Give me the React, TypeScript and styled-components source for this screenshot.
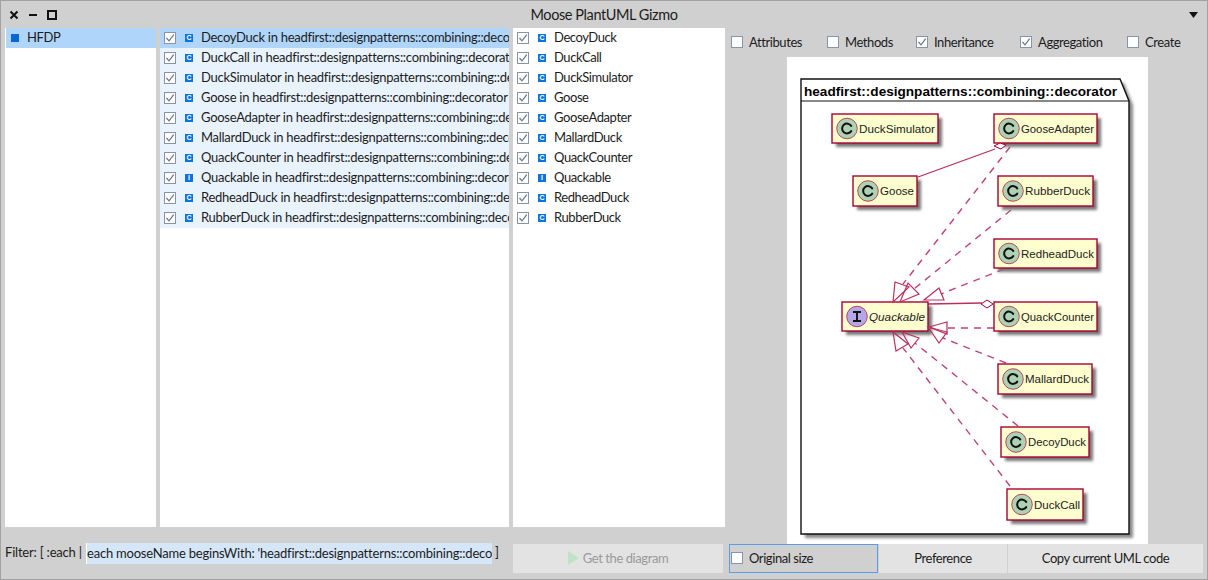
import { createGlobalStyle, styled } from 'styled-components';

// Moose PlantUML Gizmo window: three lists, option checkboxes and the rendered diagram.

const CLASSES = [
  'DecoyDuck',
  'DuckCall',
  'DuckSimulator',
  'Goose',
  'GooseAdapter',
  'MallardDuck',
  'QuackCounter',
  'Quackable',
  'RedheadDuck',
  'RubberDuck',
];

const NAMESPACE = 'headfirst::designpatterns::combining::decorator';

const OPTIONS = [
  { label: 'Attributes', checked: false, width: 96 },
  { label: 'Methods', checked: false, width: 89 },
  { label: 'Inheritance', checked: true, width: 104 },
  { label: 'Aggregation', checked: true, width: 107 },
  { label: 'Create', checked: false, width: 70 },
];

interface NodeBox {
  name: string;
  x: number;
  y: number;
  w: number;
  h: number;
}

const NODES: NodeBox[] = [
  { name: 'DuckSimulator', x: 832, y: 114, w: 106, h: 29 },
  { name: 'GooseAdapter', x: 994, y: 114, w: 103, h: 29 },
  { name: 'Goose', x: 853, y: 176, w: 64, h: 30 },
  { name: 'RubberDuck', x: 998, y: 176, w: 95, h: 30 },
  { name: 'RedheadDuck', x: 994, y: 239, w: 103, h: 29 },
  { name: 'Quackable', x: 842, y: 302, w: 86, h: 29 },
  { name: 'QuackCounter', x: 994, y: 302, w: 103, h: 29 },
  { name: 'MallardDuck', x: 998, y: 364, w: 94, h: 30 },
  { name: 'DecoyDuck', x: 1001, y: 427, w: 88, h: 30 },
  { name: 'DuckCall', x: 1007, y: 489, w: 76, h: 31 },
];

// dashed line from the implementor, then the hollow arrow head at Quackable
const REALIZATIONS = [
  { line: 'M1010 147 L903 284', head: '893,302 895,282 909,287' },
  { line: 'M1011 210 L914 289', head: '900,302 908,283 919,294' },
  { line: 'M1004 269 L941 294', head: '924,300 939,288 944,300' },
  { line: 'M994 328 L947 328', head: '929,327 947,322 947,334' },
  { line: 'M1006 363 L943 338', head: '928,327 947,332 939,343' },
  { line: 'M1018 426 L915 343', head: '902,332 919,338 911,348' },
  { line: 'M1010 486 L903 348', head: '893,332 908,344 896,351' },
];

const GlobalStyle = createGlobalStyle`
  html, body {
    margin: 0;
    padding: 0;
    background: #d0d0d0;
  }
  body {
    font-family: "Lato", "Noto Sans", sans-serif;
    font-size: 13px;
    letter-spacing: -0.42px;
    color: #1c1c1c;
  }
`;

const Window = styled.div`
  box-sizing: border-box;
  width: 1208px;
  height: 580px;
  border: 1px solid #a2a2a2;
  background: #d0d0d0;
  display: flex;
  flex-direction: column;
  overflow: hidden;
`;

const TitleBar = styled.div`
  height: 27px;
  flex: none;
  display: flex;
  align-items: center;
  position: relative;
  padding: 0 7px 0 8px;
`;

const WindowButtons = styled.div`
  display: flex;
  gap: 9px;
  align-items: center;
`;

const WindowTitle = styled.div`
  position: absolute;
  left: 0;
  right: 0;
  top: 5px;
  text-align: center;
  font-size: 14.5px;
  pointer-events: none;
`;

const MenuArrow = styled.svg`
  margin-left: auto;
  margin-right: 2px;
`;

const Body = styled.div`
  flex: 1;
  display: flex;
  min-height: 0;
`;

const LeftSide = styled.div`
  width: 724px;
  flex: none;
  display: flex;
  flex-direction: column;
`;

const Lists = styled.div`
  height: 499px;
  flex: none;
  display: flex;
  padding-left: 4px;
`;

const ListPanel = styled.div<{ $width: number; $gap: number }>`
  width: ${(p) => p.$width}px;
  margin-right: ${(p) => p.$gap}px;
  flex: none;
  background: #fff;
  overflow: hidden;
`;

const Row = styled.div<{ $tone?: 'selected' | 'soft' }>`
  height: 20px;
  display: flex;
  align-items: center;
  white-space: nowrap;
  padding-left: 4px;
  background: ${(p) =>
    p.$tone === 'selected' ? '#b0d5fb' : p.$tone === 'soft' ? '#e9f3fe' : 'transparent'};
`;

const RowText = styled.span<{ $long?: boolean }>`
  margin-top: -2px;
  letter-spacing: ${(p) => (p.$long ? '-0.28px' : '-0.42px')};
`;

const ProjectRow = styled(Row)`
  padding-left: 5px;
  margin-left: 1px;
`;

const ProjectMark = styled.span`
  width: 8px;
  height: 8px;
  background: #0a66d8;
  margin-right: 8px;
`;

const CheckFrame = styled.span<{ $margin?: number }>`
  box-sizing: border-box;
  width: 12px;
  height: 12px;
  flex: none;
  display: inline-flex;
  align-items: center;
  justify-content: center;
  border: 1px solid #8a94a6;
  background: #fcfdff;
  margin-right: ${(p) => p.$margin ?? 9}px;
`;

const TypeIcon = styled.span`
  width: 8px;
  height: 8px;
  flex: none;
  background: #0b74de;
  color: #fff;
  font: bold 7px/8px "Liberation Sans", sans-serif;
  letter-spacing: 0;
  text-align: center;
  margin-right: 8px;
`;

const FilterBar = styled.div`
  flex: 1;
  display: flex;
  align-items: flex-start;
  padding: 17px 0 0 4px;
`;

const FilterLabel = styled.span`
  width: 81px;
  flex: none;
  line-height: 16px;
  letter-spacing: -0.2px;
`;

const FilterInput = styled.div`
  width: 406px;
  height: 21px;
  flex: none;
  margin-top: -1px;
  padding: 0 0 0 1px;
  box-sizing: border-box;
  background: #fff;
  line-height: 21px;
  letter-spacing: -0.21px;
  white-space: nowrap;
  overflow: hidden;
`;

const FilterSelection = styled.span`
  display: block;
  background: #d5e6f9;
`;

const FilterClose = styled.span`
  width: 18px;
  flex: none;
  padding-left: 3px;
  line-height: 16px;
`;

const ActionButton = styled.div<{ $width: number; $disabled?: boolean }>`
  box-sizing: border-box;
  width: ${(p) => p.$width}px;
  height: 29px;
  flex: none;
  display: flex;
  align-items: center;
  justify-content: center;
  padding-bottom: 2px;
  background: #e3e3e3;
  color: ${(p) => (p.$disabled ? '#9a9a9a' : 'inherit')};
  gap: 4px;
`;

const RightSide = styled.div`
  flex: 1;
  display: flex;
  flex-direction: column;
  min-width: 0;
`;

const OptionsBar = styled.div`
  height: 29px;
  flex: none;
  display: flex;
  align-items: center;
  padding: 0 0 2px 6px;
  box-sizing: border-box;
`;

const Option = styled.label<{ $width: number }>`
  width: ${(p) => p.$width}px;
  flex: none;
  display: flex;
  align-items: center;
`;

const DiagramPanel = styled.div`
  width: 361px;
  height: 487px;
  flex: none;
  margin-left: 62px;
  background: #fff;
`;

const DiagramSvg = styled.svg`
  display: block;
  letter-spacing: 0;
`;

const BottomButtons = styled.div`
  display: flex;
  gap: 1px;
  padding-left: 4px;
`;

const SizeToggle = styled.div`
  box-sizing: border-box;
  width: 149px;
  height: 29px;
  flex: none;
  display: flex;
  align-items: center;
  padding: 0 0 2px 1px;
  border: 1px solid #5a9fe6;
  background: #d0d0d0;
`;

function Check({ checked = true, margin }: { checked?: boolean; margin?: number }) {
  return (
    <CheckFrame $margin={margin}>
      {checked && (
        <svg width="10" height="10" viewBox="0 0 10 10">
          <path d="M1.5 5 L4 7.8 L8.8 1.6" fill="none" stroke="#6e7684" strokeWidth="1.2" />
        </svg>
      )}
    </CheckFrame>
  );
}

function ClassRow({
  name,
  label,
  soft,
  long,
}: {
  name: string;
  label: string;
  soft?: 'selected' | 'soft';
  long?: boolean;
}) {
  return (
    <Row $tone={soft}>
      <Check />
      <TypeIcon>{name === 'Quackable' ? 'I' : 'C'}</TypeIcon>
      <RowText $long={long}>{label}</RowText>
    </Row>
  );
}

function UmlNode({ node }: { node: NodeBox }) {
  const isInterface = node.name === 'Quackable';
  const cx = node.x + 15;
  const cy = node.y + node.h / 2;
  return (
    <g>
      <rect
        x={node.x + 4}
        y={node.y + 4}
        width={node.w}
        height={node.h}
        fill="#777"
        filter="url(#umlShadow)"
      />
      <rect
        x={node.x}
        y={node.y}
        width={node.w}
        height={node.h}
        fill="#fefece"
        stroke="#a80036"
        strokeWidth="1.4"
      />
      <circle
        cx={cx}
        cy={cy}
        r="10.3"
        fill={isInterface ? '#b4a7e5' : '#add1b2'}
        stroke="#a80036"
        strokeWidth="0.9"
        strokeOpacity="0.75"
      />
      {isInterface ? (
        <path
          d={`M${cx - 4} ${cy - 4.5} H${cx + 4} M${cx} ${cy - 4.5} V${cy + 4.5} M${cx - 4} ${cy + 4.5} H${cx + 4}`}
          fill="none"
          stroke="#111"
          strokeWidth="1.9"
        />
      ) : (
        <path
          d={`M${cx + 4.2} ${cy - 2.6} A4.9 4.9 0 1 0 ${cx + 4.2} ${cy + 2.6}`}
          fill="none"
          stroke="#111"
          strokeWidth="2"
          strokeLinecap="round"
        />
      )}
      <text
        x={node.x + 27}
        y={cy + 4}
        fontFamily="'Liberation Sans', sans-serif"
        fontSize="11"
        fontStyle={isInterface ? 'italic' : 'normal'}
        fill="#222"
        textLength={node.w - 30}
        lengthAdjust="spacingAndGlyphs"
      >
        {node.name}
      </text>
    </g>
  );
}

function Diagram() {
  return (
    <DiagramSvg width="361" height="487" viewBox="787 57 361 487">
      <defs>
        <filter id="umlShadow" x="-20%" y="-20%" width="140%" height="140%">
          <feGaussianBlur stdDeviation="1.5" />
        </filter>
      </defs>
      {/* package frame */}
      <path d="M805 83 H1124 L1133 105 V538 H805 Z" fill="#888" filter="url(#umlShadow)" />
      <path d="M801 534 V79 H1120 L1129 101 V534 Z" fill="#fff" stroke="#111" strokeWidth="1.4" />
      <path d="M801 101 H1129" fill="none" stroke="#111" strokeWidth="1.2" />
      <text
        x="804"
        y="95.5"
        fontFamily="'Liberation Sans', sans-serif"
        fontSize="13"
        fontWeight="bold"
        fill="#000"
        textLength="313"
        lengthAdjust="spacingAndGlyphs"
      >
        {NAMESPACE}
      </text>
      {/* aggregations */}
      <path d="M918 177 L995 149" stroke="#b8305f" strokeWidth="1.3" fill="none" />
      <path d="M928 304 L982 303" stroke="#b8305f" strokeWidth="1.3" fill="none" />
      {/* realizations */}
      {REALIZATIONS.map((r) => (
        <path
          key={r.line}
          d={r.line}
          stroke="#c0447a"
          strokeWidth="1.4"
          strokeDasharray="7 6"
          fill="none"
        />
      ))}
      {NODES.map((node) => (
        <UmlNode key={node.name} node={node} />
      ))}
      {REALIZATIONS.map((r) => (
        <polygon key={r.head} points={r.head} fill="none" stroke="#b8305f" strokeWidth="1.2" />
      ))}
      <polygon points="994,146 1000,143 1006,145 1001,149" fill="#fff" stroke="#a80036" strokeWidth="1" />
      <polygon points="981,304 987,300 993,304 987,308" fill="#fff" stroke="#a80036" strokeWidth="1" />
    </DiagramSvg>
  );
}

export default function App() {
  return (
    <>
      <GlobalStyle />
      <Window>
        <TitleBar>
          <WindowButtons>
            <svg width="10" height="10" viewBox="0 0 10 10">
              <path d="M1.5 1.5 L8.5 8.5 M8.5 1.5 L1.5 8.5" stroke="#111" strokeWidth="2" />
            </svg>
            <svg width="10" height="10" viewBox="0 0 10 10">
              <path d="M1 5 H9" stroke="#111" strokeWidth="2" />
            </svg>
            <svg width="10" height="10" viewBox="0 0 10 10">
              <rect x="1" y="1" width="8" height="8" fill="none" stroke="#111" strokeWidth="2" />
            </svg>
          </WindowButtons>
          <WindowTitle>Moose PlantUML Gizmo</WindowTitle>
          <MenuArrow width="9" height="6" viewBox="0 0 9 6">
            <path d="M0 0 H9 L4.5 6 Z" fill="#111" />
          </MenuArrow>
        </TitleBar>
        <Body>
          <LeftSide>
            <Lists>
              <ListPanel $width={151} $gap={4}>
                <ProjectRow $tone="selected">
                  <ProjectMark />
                  <RowText>HFDP</RowText>
                </ProjectRow>
              </ListPanel>
              <ListPanel $width={349} $gap={4}>
                {CLASSES.map((name, i) => (
                  <ClassRow
                    key={name}
                    name={name}
                    label={`${name} in ${NAMESPACE}`}
                    soft={i === 0 ? 'selected' : 'soft'}
                    long
                  />
                ))}
              </ListPanel>
              <ListPanel $width={212} $gap={0}>
                {CLASSES.map((name) => (
                  <ClassRow key={name} name={name} label={name} />
                ))}
              </ListPanel>
            </Lists>
            <FilterBar>
              <FilterLabel>Filter: [ :each |</FilterLabel>
              <FilterInput>
                <FilterSelection>each mooseName beginsWith: 'headfirst::designpatterns::combining::deco</FilterSelection>
              </FilterInput>
              <FilterClose>]</FilterClose>
              <ActionButton $width={210} $disabled>
                <svg width="11" height="14" viewBox="0 0 11 14">
                  <path d="M0 0 L11 7 L0 14 Z" fill="#bfe3c6" />
                </svg>
                Get the diagram
              </ActionButton>
            </FilterBar>
          </LeftSide>
          <RightSide>
            <OptionsBar>
              {OPTIONS.map((o) => (
                <Option key={o.label} $width={o.width}>
                  <Check checked={o.checked} margin={6} />
                  {o.label}
                </Option>
              ))}
            </OptionsBar>
            <DiagramPanel>
              <Diagram />
            </DiagramPanel>
            <BottomButtons>
              <SizeToggle>
                <Check checked={false} margin={6} />
                Original size
              </SizeToggle>
              <ActionButton $width={128}>Preference</ActionButton>
              <ActionButton $width={195}>Copy current UML code</ActionButton>
            </BottomButtons>
          </RightSide>
        </Body>
      </Window>
    </>
  );
}
